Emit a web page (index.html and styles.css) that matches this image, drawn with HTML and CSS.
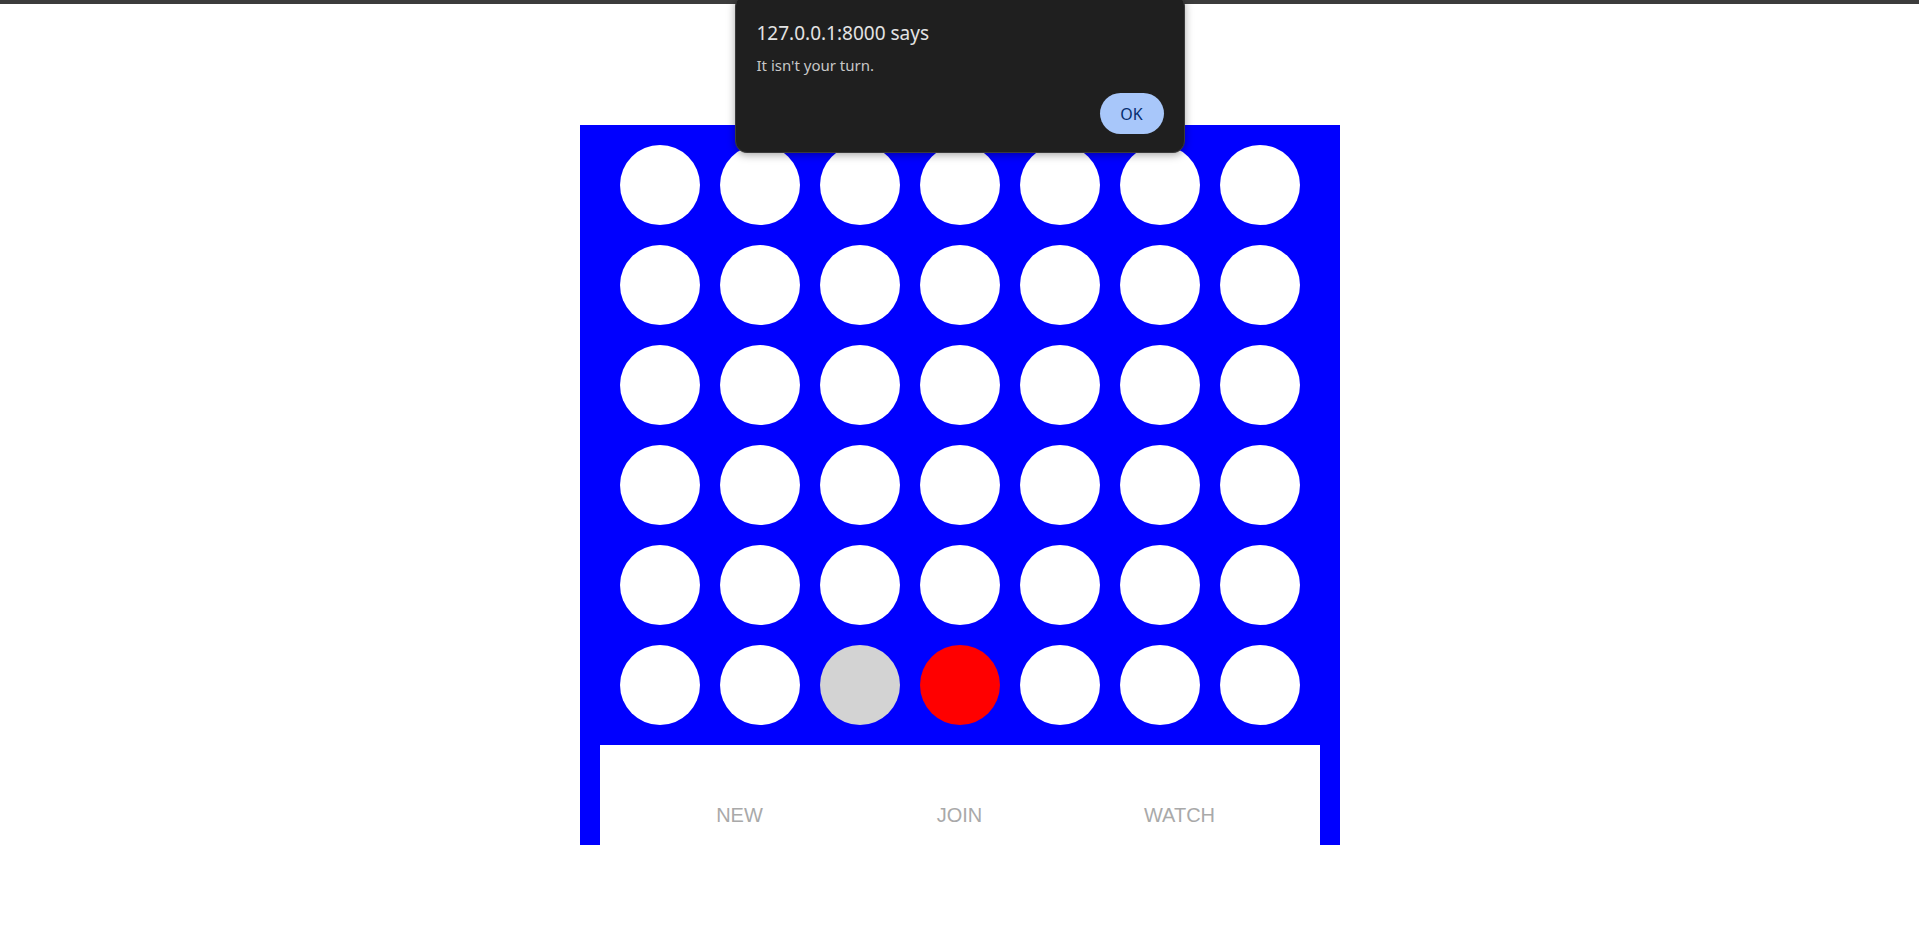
FILE: index.html
```html
<!DOCTYPE html>
<html lang="en">
<head>
<meta charset="utf-8">
<title>Connect Four</title>
<link rel="stylesheet" href="styles.css">
</head>
<body>
<div class="topbar"></div>
<main class="board">
  <div class="grid">
    <div class="hole"></div><div class="hole"></div><div class="hole"></div><div class="hole"></div><div class="hole"></div><div class="hole"></div><div class="hole"></div>
    <div class="hole"></div><div class="hole"></div><div class="hole"></div><div class="hole"></div><div class="hole"></div><div class="hole"></div><div class="hole"></div>
    <div class="hole"></div><div class="hole"></div><div class="hole"></div><div class="hole"></div><div class="hole"></div><div class="hole"></div><div class="hole"></div>
    <div class="hole"></div><div class="hole"></div><div class="hole"></div><div class="hole"></div><div class="hole"></div><div class="hole"></div><div class="hole"></div>
    <div class="hole"></div><div class="hole"></div><div class="hole"></div><div class="hole"></div><div class="hole"></div><div class="hole"></div><div class="hole"></div>
    <div class="hole"></div><div class="hole"></div><div class="hole hover"></div><div class="hole red"></div><div class="hole"></div><div class="hole"></div><div class="hole"></div>
  </div>
  <div class="controls">
    <a class="btn">NEW</a>
    <a class="btn">JOIN</a>
    <a class="btn">WATCH</a>
  </div>
</main>
<div class="dialog">
  <div class="dialog-title">127.0.0.1:8000 says</div>
  <div class="dialog-msg">It isn't your turn.</div>
  <div class="dialog-actions"><button class="ok">OK</button></div>
</div>
</body>
</html>
```
FILE: styles.css
```css
html, body {
  margin: 0;
  padding: 0;
  background: #ffffff;
}
body {
  font-family: "Liberation Sans", Arial, sans-serif;
  position: relative;
  min-height: 939px;
  overflow: hidden;
}
.topbar {
  height: 4px;
  background: #3c3c3c;
}
.board {
  width: 760px;
  margin: 121px auto 0;
  background: #0000ff;
  padding: 20px 20px 0;
  box-sizing: border-box;
}
.grid {
  display: grid;
  grid-template-columns: repeat(7, 80px);
  grid-auto-rows: 80px;
  gap: 20px;
  padding: 0 20px 20px;
}
.hole {
  width: 80px;
  height: 80px;
  border-radius: 50%;
  background: #ffffff;
}
.hole.hover {
  background: #d3d3d3;
}
.hole.red {
  background: #ff0000;
}
.controls {
  background: #ffffff;
  height: 100px;
  box-sizing: border-box;
  padding-top: 59px;
  display: grid;
  grid-template-columns: repeat(3, 220px);
  justify-content: center;
}
.btn {
  text-align: center;
  font-size: 20px;
  line-height: 23px;
  color: #a9a9a9;
}
.dialog {
  position: absolute;
  top: -6px;
  left: calc(50% - 225px);
  width: 450px;
  height: 159px;
  box-sizing: border-box;
  background: #1f1f1f;
  border: 1px solid #3a3a3a;
  border-radius: 12px;
  box-shadow: 0 2px 8px rgba(0, 0, 0, 0.35);
  padding: 26px 20px 0 21px;
  font-family: "Noto Sans", "Open Sans", sans-serif;
  display: flex;
  flex-direction: column;
}
.dialog-title {
  font-size: 19px;
  line-height: 24px;
  color: #e3e3e3;
}
.dialog-msg {
  margin-top: 10px;
  font-size: 15px;
  line-height: 20px;
  color: #c7c7c7;
}
.dialog-actions {
  margin-top: 18px;
  display: flex;
  justify-content: flex-end;
}
.ok {
  width: 64px;
  height: 41px;
  border: none;
  border-radius: 21px;
  background: #a8c7fa;
  color: #062e6f;
  font-family: "Noto Sans", "Open Sans", sans-serif;
  font-size: 16px;
  padding: 0;
}
```
